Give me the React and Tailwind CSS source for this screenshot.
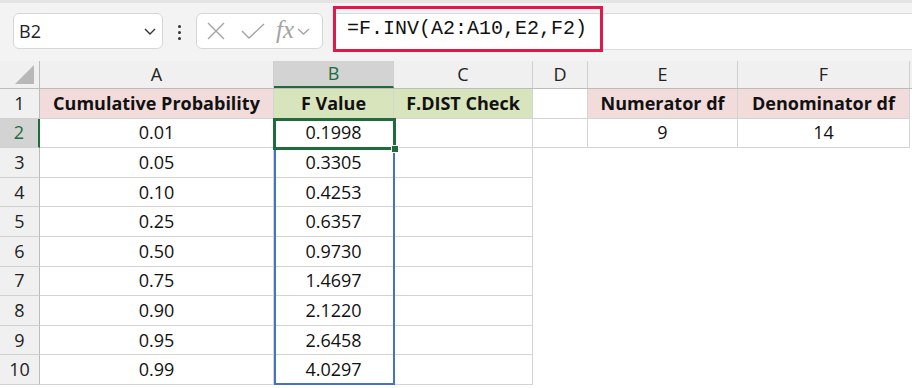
import React from 'react';

const cols = [
    { key: 'A', w: 'w-[234px]' },
    { key: 'B', w: 'w-[120px]' },
    { key: 'C', w: 'w-[139px]' },
    { key: 'D', w: 'w-[55px]' },
    { key: 'E', w: 'w-[150px]' },
    { key: 'F', w: 'w-[172px]' },
];

const probs = ['0.01', '0.05', '0.10', '0.25', '0.50', '0.75', '0.90', '0.95', '0.99'];
const fvals = ['0.1998', '0.3305', '0.4253', '0.6357', '0.9730', '1.4697', '2.1220', '2.6458', '4.0297'];

const cellFont = "font-['Open_Sans',sans-serif] text-[18px] text-[#111]";

function Cell({ w, bg = 'bg-white', border = true, bold = false, children }) {
    return (
        <div
            className={`${w} h-full flex items-center justify-center shrink-0 whitespace-nowrap ${bg} ${border ? 'border-r border-b border-[#d4d4d4]' : ''} ${bold ? 'font-bold' : ''}`}
        >
            {children}
        </div>
    );
}

function Row({ num, selected, children }) {
    return (
        <div className="flex h-[29.6px]">
            <div
                className={`w-[40px] shrink-0 flex items-center justify-center border-b border-[#d0d0d0] text-[18px] font-['Open_Sans',sans-serif] ${selected ? 'bg-[#d3d3d3] text-[#1e6b3c] border-r-2 border-r-[#1e6b3c]' : 'bg-[#f0f0f0] text-[#222] border-r border-r-[#bcbcbc]'}`}
            >
                {num}
            </div>
            <div className={`flex h-full ${cellFont}`}>{children}</div>
        </div>
    );
}

export default function App() {
    return (
        <div className="w-[912px] h-[388px] bg-white overflow-hidden relative">
            {/* toolbar */}
            <div className="h-[61px] bg-[#f3f3f3] border-t-[3px] border-[#e4e4e4] relative">
                <div className="absolute left-[13px] top-[10px] w-[150px] h-[36px] bg-white rounded-[6px] border border-[#d6d6d6] flex items-center justify-between px-[5px]">
                    <span className="font-['Open_Sans',sans-serif] text-[18px] text-[#222]">B2</span>
                    <svg width="14" height="10" viewBox="0 0 14 10"><path d="M2 3 L7 8 L12 3" fill="none" stroke="#333" strokeWidth="1.4" /></svg>
                </div>
                <div className="absolute left-[178px] top-[22px] flex flex-col gap-[3px]">
                    <span className="w-[3px] h-[3px] bg-[#333] rounded-full"></span>
                    <span className="w-[3px] h-[3px] bg-[#333] rounded-full"></span>
                    <span className="w-[3px] h-[3px] bg-[#333] rounded-full"></span>
                </div>
                <div className="absolute left-[196px] top-[10px] w-[127px] h-[36px] bg-white rounded-[6px] border border-[#d6d6d6] flex items-center">
                    <svg className="ml-[9px]" width="20" height="20" viewBox="0 0 20 20"><path d="M2 2 L18 18 M18 2 L2 18" stroke="#a3a3a3" strokeWidth="1.4" /></svg>
                    <svg className="ml-[14px]" width="26" height="20" viewBox="0 0 26 20"><path d="M2 10 L9 17 L24 3" fill="none" stroke="#a3a3a3" strokeWidth="1.4" /></svg>
                    <span className="ml-[10px] font-['Liberation_Serif',serif] italic text-[25px] text-[#a3a3a3] leading-none -mt-[3px]">fx</span>
                    <svg className="ml-[3px]" width="13" height="10" viewBox="0 0 13 10"><path d="M1 3 L6.5 8 L12 3" fill="none" stroke="#a3a3a3" strokeWidth="1.3" /></svg>
                </div>
                <div className="absolute left-[333px] top-[10px] right-0 h-[37px] bg-white border-y border-[#dadada]"></div>
                <div className="absolute left-[333px] top-[3px] w-[270px] h-[46px] border-[3px] border-[#e2184a] flex items-center pl-[11px]">
                    <span className="font-['Liberation_Mono',monospace] text-[20px] text-[#111]">=F.INV(A2:A10,E2,F2)</span>
                </div>
            </div>

            {/* column headers */}
            <div className="flex h-[28px] bg-[#f0f0f0] border-b border-[#bcbcbc] font-['Open_Sans',sans-serif] text-[18px] text-[#222]">
                <div className="w-[40px] shrink-0 border-r border-[#bcbcbc] relative">
                    <div className="absolute right-[5px] bottom-[4px] w-0 h-0 border-l-[19px] border-l-transparent border-b-[19px] border-b-[#b8b8b8]"></div>
                </div>
                {cols.map((c) => (
                    <div
                        key={c.key}
                        className={`${c.w} shrink-0 flex items-center justify-center border-r border-[#d0d0d0] ${c.key === 'B' ? 'bg-[#d3d3d3] text-[#1e6b3c] border-b-2 border-b-[#1e6b3c]' : ''}`}
                    >
                        {c.key}
                    </div>
                ))}
            </div>

            {/* rows */}
            <Row num="1">
                <Cell w="w-[234px]" bg="bg-[#f2dcdb]" bold>Cumulative Probability</Cell>
                <Cell w="w-[120px]" bg="bg-[#d8e4bc]" bold>F Value</Cell>
                <Cell w="w-[139px]" bg="bg-[#d8e4bc]" bold>F.DIST Check</Cell>
                <Cell w="w-[55px]" />
                <Cell w="w-[150px]" bg="bg-[#f2dcdb]" bold>Numerator df</Cell>
                <Cell w="w-[172px]" bg="bg-[#f2dcdb]" bold>Denominator df</Cell>
            </Row>
            {probs.map((p, i) => (
                <Row key={p} num={i + 2} selected={i === 0}>
                    <Cell w="w-[234px]">{p}</Cell>
                    <Cell w="w-[120px]">{fvals[i]}</Cell>
                    <Cell w="w-[139px]" />
                    <Cell w="w-[55px]" border={i === 0} />
                    {i === 0 ? (
                        <>
                            <Cell w="w-[150px]">9</Cell>
                            <Cell w="w-[172px]">14</Cell>
                        </>
                    ) : (
                        <>
                            <Cell w="w-[150px]" border={false} />
                            <Cell w="w-[172px]" border={false} />
                        </>
                    )}
                </Row>
            ))}

            {/* range highlight B2:B10 */}
            <div className="absolute left-[274px] top-[118px] w-[121px] h-[267px] border-2 border-[#4472c4] pointer-events-none"></div>
            {/* active cell B2 */}
            <div className="absolute left-[273px] top-[118px] w-[123px] h-[32px] border-[3px] border-[#1e6b3c] pointer-events-none"></div>
            <div className="absolute left-[391px] top-[145px] w-[8px] h-[8px] bg-[#1e6b3c] border border-white pointer-events-none"></div>
        </div>
    );
}
